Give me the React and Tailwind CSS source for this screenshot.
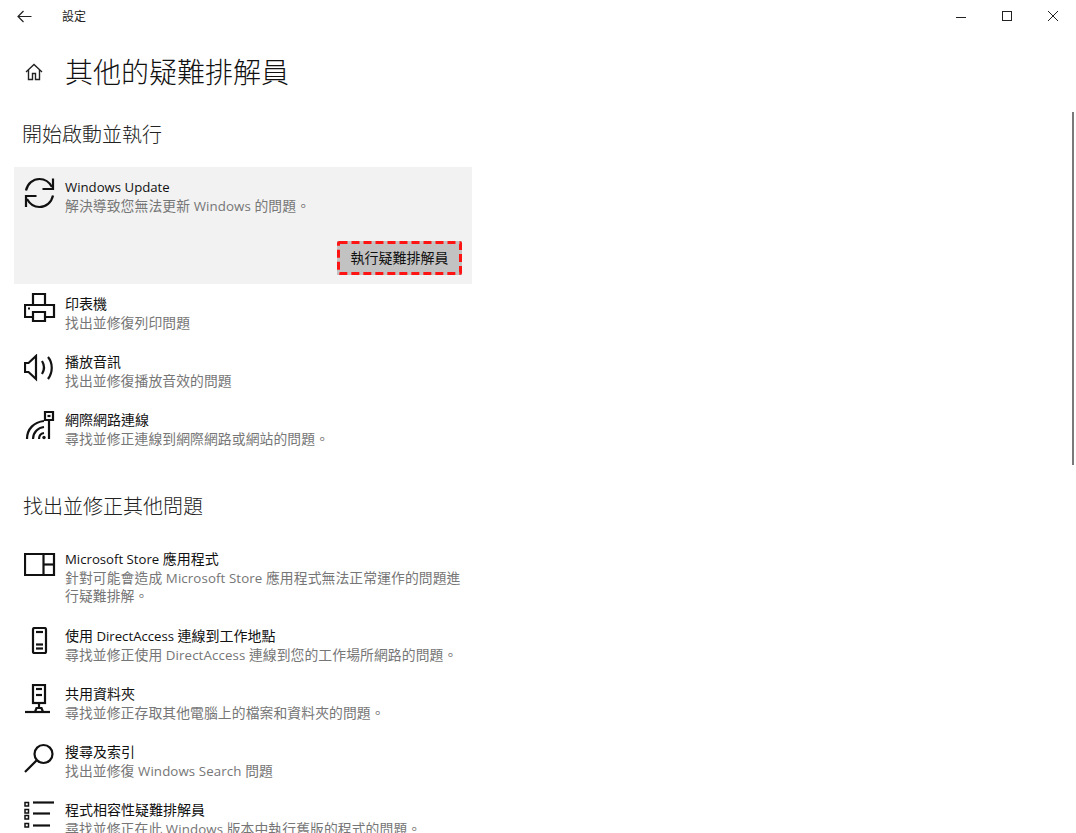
const Stroke = ({ w = 30, h = 30, children, sw = 2.2 }) => (
  <svg width={w} height={h} viewBox={`0 0 ${w} ${h}`} fill="none" stroke="#111" strokeWidth={sw} className="block shrink-0">
    {children}
  </svg>
);

const SyncIcon = () => (
  <Stroke w={32} h={32}>
    <path d="M2 13.500C3.500 6.500 9 2 15.500 2C20.500 2 25 4.500 28 10" />
    <path d="M29 1.500V12H18.500" />
    <path d="M29 18.500C27.500 25.500 22 30 15.500 30C10.500 30 6 27.500 3 22" />
    <path d="M2 30V19H12.500" />
  </Stroke>
);
const PrinterIcon = () => (
  <Stroke w={32} h={32}>
    <path d="M9 12V1H21V12" />
    <path d="M9 24H1V12H30V24H21" />
    <path d="M9 19H21V28H9Z" />
    <path d="M4 15.500H6" />
  </Stroke>
);
const SpeakerIcon = () => (
  <Stroke w={32} h={32}>
    <path d="M1 9H4.500L12 2V25L4.500 18H1Z" />
    <path d="M18 7C20.500 11 20.500 16 18 20" />
    <path d="M24 3C29 9 29 18 24 25" />
  </Stroke>
);
const NetworkIcon = () => (
  <Stroke w={32} h={32}>
    <path d="M21 1H29V9H21Z" />
    <path d="M23.500 5H26.500" />
    <path d="M25 9V28" />
    <path d="M3 28C3 18 10 11 20 10" />
    <path d="M9 28C9 21.500 14 16.500 20 16" />
    <path d="M15 28C15 25 17 22.500 20 22" />
    <circle cx="20" cy="26.500" r="1.700" fill="#111" stroke="none" />
  </Stroke>
);
const StoreIcon = () => (
  <Stroke w={32} h={24}>
    <path d="M1 1H30V22H1Z" />
    <path d="M19.500 1V22" />
    <path d="M19.500 11.500H30" />
  </Stroke>
);
const PhoneIcon = () => (
  <Stroke w={32} h={28}>
    <rect x="9" y="1" width="13" height="25" rx="1.500" />
    <path d="M12 5H19" />
    <path d="M12 17.500H19" />
    <path d="M12 21.500H19" />
  </Stroke>
);
const ShareIcon = () => (
  <Stroke w={32} h={32}>
    <rect x="9" y="1" width="12" height="18" />
    <path d="M12 5H18" />
    <path d="M12 11H18" />
    <path d="M15 19V24" />
    <path d="M1 28H26" />
    <path d="M11 28L12.500 24H17.500L19 28" />
  </Stroke>
);
const SearchIcon = () => (
  <Stroke w={32} h={32}>
    <circle cx="19.500" cy="11" r="9" />
    <path d="M12.500 17.500L1 29" />
  </Stroke>
);
const ListIcon = () => (
  <Stroke w={32} h={32}>
    <g strokeWidth="1.500">
      <rect x="1" y="2.500" width="3.500" height="3.500" />
      <rect x="1" y="9.500" width="3.500" height="3.500" />
      <rect x="1" y="15.500" width="3.500" height="3.500" />
      <rect x="1" y="23.500" width="3.500" height="3.500" />
    </g>
    <path d="M9 2.500H30" />
    <path d="M9 13.500H26" />
    <path d="M9 25.500H26" />
  </Stroke>
);

const T = ({ children }) => <span className="text-[13.2px]">{children}</span>;
const D = ({ children }) => <span className="text-[13.3px]">{children}</span>;

const Row = ({ icon, title, desc, iconTop = "mt-0", cls = "h-[58px]" }) => (
  <div className={`flex pl-[10px] pt-[10px] ${cls}`}>
    <div className={`w-[41px] shrink-0 ${iconTop}`}>{icon}</div>
    <div className="w-[400px]">
      <div className="text-[14px] leading-[20px] text-[#111]">{title}</div>
      <div className="text-[13.8px] leading-[18px] text-[#767676] tracking-[0.1px]">{desc}</div>
    </div>
  </div>
);

export default function App() {
  return (
    <div
      className="relative w-[1076px] h-[833px] overflow-hidden bg-white text-[#111]"
      style={{ fontFamily: '"Open Sans", "Noto Sans CJK TC", sans-serif' }}
    >
      <header className="flex items-center h-[32px]">
        <div className="w-[62px] pl-[17px]">
          <svg width="15" height="13" viewBox="0 0 15 13" fill="none" stroke="#222" strokeWidth="1.2">
            <path d="M14.500 6.500H1M6.500 1L1 6.500L6.500 12" />
          </svg>
        </div>
        <span className="text-[12px] text-[#222] mt-[2px]">設定</span>
        <div className="ml-auto flex items-center pr-[18px] gap-[36px]">
          <svg width="10" height="10" viewBox="0 0 10 10" stroke="#222" fill="none"><path d="M0 6.500H10" /></svg>
          <svg width="10" height="10" viewBox="0 0 10 10" stroke="#222" fill="none"><rect x="0.500" y="0.500" width="9" height="9" /></svg>
          <svg width="10" height="10" viewBox="0 0 10 10" stroke="#222" fill="none"><path d="M0 0L10 10M10 0L0 10" /></svg>
        </div>
      </header>

      <div className="flex items-center h-[50px] mt-[15px] pl-[25px]">
        <svg width="18" height="18" viewBox="0 0 18 18" fill="none" stroke="#222" strokeWidth="1.4" className="shrink-0">
          <path d="M1 9L9 1.500L17 9" />
          <path d="M3.500 7V16.500H7.500V10.500H10.500V16.500H14.500V7" />
        </svg>
        <h1 className="ml-[22px] text-[28px] leading-[50px] font-light text-[#111]">其他的疑難排解員</h1>
      </div>

      <h2 className="mt-[23px] ml-[22px] text-[20px] leading-[30px] font-light text-[#222]">開始啟動並執行</h2>

      <section className="mt-[17px] w-[458px] ml-[14px]">
        <div className="bg-[#f2f2f2] h-[117px] flex flex-col">
          <Row
            cls="h-[66px]"
            icon={<SyncIcon />}
            title={<T>Windows Update</T>}
            desc={<>解決導致您無法更新<D> Windows </D>的問題。</>}
          />
          <div className="flex justify-end pr-[10px] mt-[8px]">
            <button className="relative w-[125px] h-[34px] bg-[#c2c2c2] text-[14px] text-[#111] leading-none flex items-center justify-center">
              執行疑難排解員
              <svg width="125" height="34" viewBox="0 0 125 34" fill="none" className="absolute inset-0">
                <rect x="1.500" y="1.500" width="122" height="31" rx="1" stroke="#ff1414" strokeWidth="3" strokeDasharray="8 4" />
              </svg>
            </button>
          </div>
        </div>
        <Row icon={<PrinterIcon />} iconTop="-mt-[1px]" title="印表機" desc="找出並修復列印問題" />
        <Row icon={<SpeakerIcon />} iconTop="mt-[2px]" title="播放音訊" desc="找出並修復播放音效的問題" />
        <Row icon={<NetworkIcon />} iconTop="mt-[1px]" title="網際網路連線" desc="尋找並修正連線到網際網路或網站的問題。" />
      </section>

      <h2 className="mt-[34px] ml-[23px] text-[20px] leading-[30px] font-light text-[#222]">找出並修正其他問題</h2>

      <section className="mt-[17px] w-[458px] ml-[14px]">
        <Row
          cls="h-[77px]"
          icon={<StoreIcon />}
          iconTop="mt-[4px]"
          title={<><T>Microsoft Store </T>應用程式</>}
          desc={<>針對可能會造成<D> Microsoft Store </D>應用程式無法正常運作的問題進行疑難排解。</>}
        />
        <Row
          icon={<PhoneIcon />}
          iconTop="mt-[1px]"
          title={<>使用<T> DirectAccess </T>連線到工作地點</>}
          desc={<>尋找並修正使用<D> DirectAccess </D>連線到您的工作場所網路的問題。</>}
        />
        <Row icon={<ShareIcon />} title="共用資料夾" desc="尋找並修正存取其他電腦上的檔案和資料夾的問題。" />
        <Row
          icon={<SearchIcon />}
          iconTop="mt-[1px]"
          title="搜尋及索引"
          desc={<>找出並修復<D> Windows Search </D>問題</>}
        />
        <Row
          icon={<ListIcon />}
          title="程式相容性疑難排解員"
          desc={<>尋找並修正在此<D> Windows </D>版本中執行舊版的程式的問題。</>}
        />
      </section>

      <div className="absolute right-[2px] top-[112px] w-[2px] h-[353px] bg-[#7a7a7a]" />
    </div>
  );
}
